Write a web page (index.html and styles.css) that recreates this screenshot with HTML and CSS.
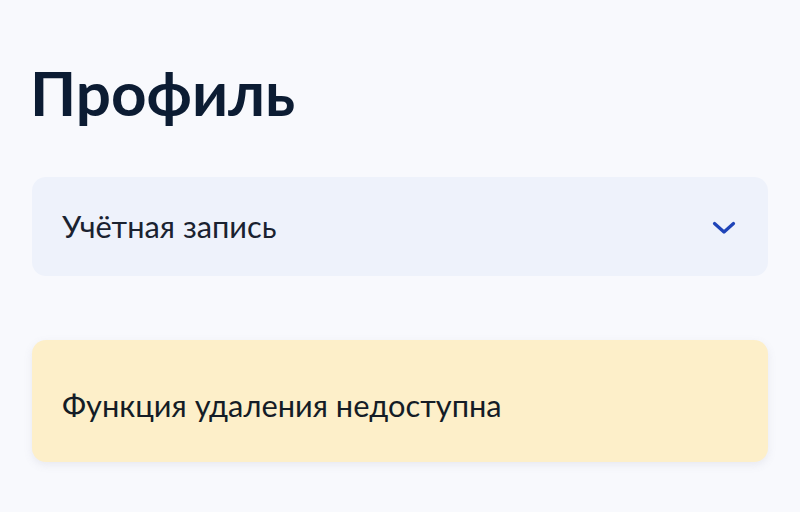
FILE: index.html
```html
<!DOCTYPE html>
<html lang="ru">
<head>
<meta charset="utf-8">
<link rel="stylesheet" href="styles.css">
</head>
<body>
<main class="page">
  <h1 class="title">Профиль</h1>
  <div class="accordion">
    <span class="accordion-label">Учётная запись</span>
    <svg class="chevron" width="24" height="16" viewBox="0 0 24 16"><path d="M2.5 3.5 L12 12 L21.5 3.5" fill="none" stroke="#1f44b8" stroke-width="3.2" stroke-linecap="round" stroke-linejoin="round"/></svg>
  </div>
  <div class="notice">Функция удаления недоступна</div>
</main>
</body>
</html>
```
FILE: styles.css
```css
html, body {
  margin: 0;
  padding: 0;
  background: #f8f9fd;
}
body {
  width: 800px;
  height: 512px;
  overflow: hidden;
  font-family: Lato, "Noto Sans", sans-serif;
  color: #111c2b;
}
.page {
  display: flex;
  flex-direction: column;
  padding: 0 32px;
}
.title {
  margin: 52px 0 0 -2px;
  font-size: 62px;
  font-weight: 700;
  line-height: 80px;
  color: #0c1c33;
  letter-spacing: 0;
}
.accordion {
  margin-top: 45px;
  height: 99px;
  border-radius: 14px;
  background: #eef2fb;
  display: flex;
  align-items: center;
  justify-content: space-between;
  padding: 0 32px 0 30px;
}
.accordion-label {
  font-size: 30.8px;
  color: #1a2230;
}
.chevron {
  display: block;
  margin-top: 2px;
}
.notice {
  margin-top: 64px;
  height: 122px;
  border-radius: 14px;
  background: #fdefc9;
  box-shadow: 0 3px 8px rgba(120, 120, 150, 0.12);
  display: flex;
  align-items: center;
  padding: 8px 30px 0;
  box-sizing: border-box;
  font-size: 30.8px;
  color: #141c26;
}
```
